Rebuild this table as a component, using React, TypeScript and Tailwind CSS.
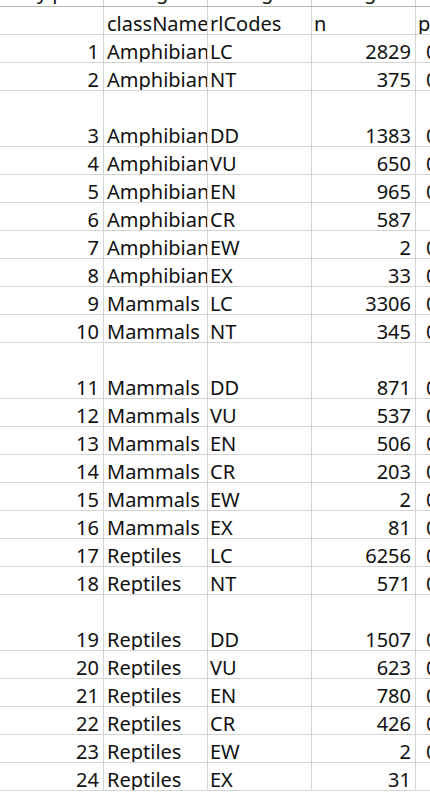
import React from "react";

type Row = { id: number; cls: string; code: string; n: number; p: string; tall?: boolean };

const rows: Row[] = [
  { id: 1, cls: "Amphibians", code: "LC", n: 2829, p: "0.34" },
  { id: 2, cls: "Amphibians", code: "NT", n: 375, p: "0.04" },
  { id: 3, cls: "Amphibians", code: "DD", n: 1383, p: "0.16", tall: true },
  { id: 4, cls: "Amphibians", code: "VU", n: 650, p: "0.08" },
  { id: 5, cls: "Amphibians", code: "EN", n: 965, p: "0.11" },
  { id: 6, cls: "Amphibians", code: "CR", n: 587, p: "" },
  { id: 7, cls: "Amphibians", code: "EW", n: 2, p: "0.00" },
  { id: 8, cls: "Amphibians", code: "EX", n: 33, p: "0.00" },
  { id: 9, cls: "Mammals", code: "LC", n: 3306, p: "0.56" },
  { id: 10, cls: "Mammals", code: "NT", n: 345, p: "0.06" },
  { id: 11, cls: "Mammals", code: "DD", n: 871, p: "0.15", tall: true },
  { id: 12, cls: "Mammals", code: "VU", n: 537, p: "0.09" },
  { id: 13, cls: "Mammals", code: "EN", n: 506, p: "0.09" },
  { id: 14, cls: "Mammals", code: "CR", n: 203, p: "0.03" },
  { id: 15, cls: "Mammals", code: "EW", n: 2, p: "0.00" },
  { id: 16, cls: "Mammals", code: "EX", n: 81, p: "0.01" },
  { id: 17, cls: "Reptiles", code: "LC", n: 6256, p: "0.61" },
  { id: 18, cls: "Reptiles", code: "NT", n: 571, p: "0.06" },
  { id: 19, cls: "Reptiles", code: "DD", n: 1507, p: "0.15", tall: true },
  { id: 20, cls: "Reptiles", code: "VU", n: 623, p: "0.06" },
  { id: 21, cls: "Reptiles", code: "EN", n: 780, p: "0.08" },
  { id: 22, cls: "Reptiles", code: "CR", n: 426, p: "0.04" },
  { id: 23, cls: "Reptiles", code: "EW", n: 2, p: "0.00" },
  { id: 24, cls: "Reptiles", code: "EX", n: 31, p: "" },
];

const cell = "w-[104px] shrink-0 border-r border-[#d4d4d4] overflow-hidden whitespace-nowrap flex items-end";

function SheetRow({
  a,
  b,
  c,
  d,
  e,
  tall,
  head,
}: {
  a: string;
  b: string;
  c: string;
  d: string;
  e: string;
  tall?: boolean;
  head?: boolean;
}) {
  return (
    <div className={`flex border-b border-[#d4d4d4] ${tall ? "h-[56px]" : "h-[28px]"}`}>
      <div className={`${cell} justify-end pr-[4px]`}>{a}</div>
      <div className={`${cell} pl-[3px]`}>{b}</div>
      <div className={`${cell} pl-[2px]`}>{c}</div>
      <div className={`${cell} ${head ? "pl-[2px]" : "justify-end pr-[4px]"}`}>{d}</div>
      <div className={`${cell} w-[120px] border-r-0 ${head ? "pl-[2px]" : "pl-[10px]"}`}>{e}</div>
    </div>
  );
}

export default function App() {
  return (
    <div
      className="w-[430px] h-[793px] overflow-hidden bg-white text-[20px] leading-[20px] text-[#111]"
      style={{ fontFamily: '"Noto Sans", "Noto Sans CJK SC", sans-serif' }}
    >
      {/* row above, only descenders peek through */}
      <div className="h-[7px] overflow-hidden border-b border-[#b8b8b8]">
        <div className="flex h-[33px] mt-[-26px]">
          <div className={`${cell} pl-[37px] pb-[5px]`}>yip</div>
          <div className={`${cell} pl-[52px] pb-[5px]`}>g</div>
          <div className={`${cell} pl-[53px] pb-[5px]`}>g</div>
          <div className={`${cell} pl-[52px] pb-[5px]`}>g</div>
          <div className={`${cell} w-[120px] border-r-0`} />
        </div>
      </div>
      <SheetRow a="" b="classNamen" c="rlCodes" d="n" e="p" head />
      {rows.map((r) => (
        <SheetRow key={r.id} a={String(r.id)} b={r.cls} c={r.code} d={String(r.n)} e={r.p} tall={r.tall} />
      ))}
    </div>
  );
}
